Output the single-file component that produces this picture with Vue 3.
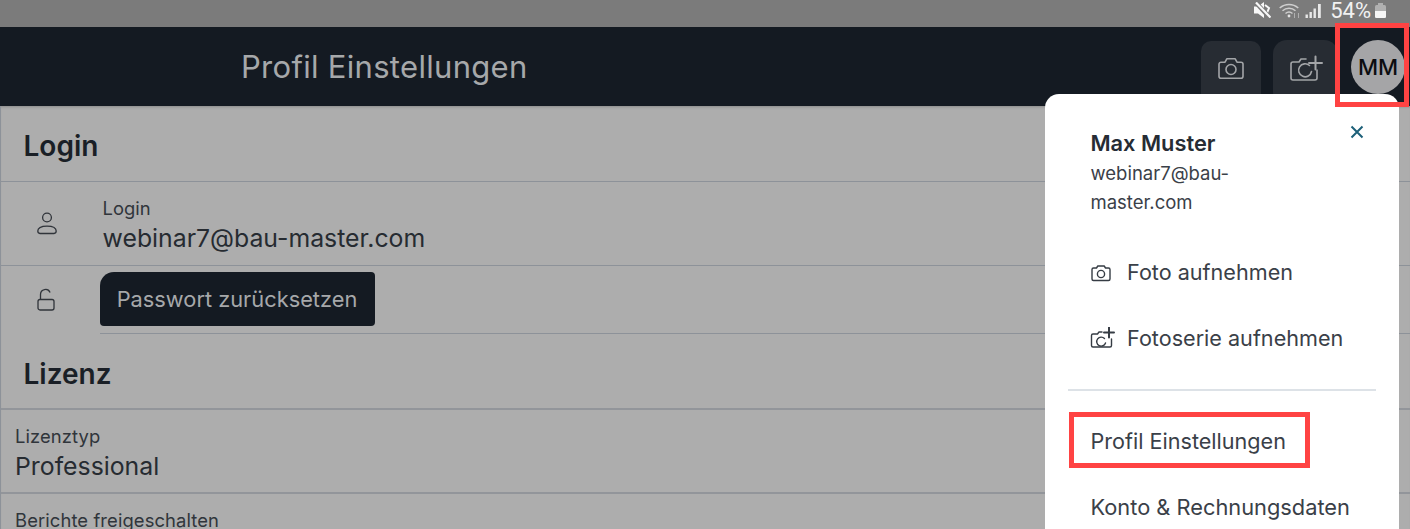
<script setup>
const lizenz = [
  { label: 'Lizenztyp', value: 'Professional' },
  { label: 'Berichte freigeschalten', value: '' },
]
</script>

<template>
  <div class="page">
    <div class="status">
      <svg class="mute" width="17" height="16" viewBox="0 0 17 16"><path d="M0 4.500h4L10 0v16l-6-4.500H0z" fill="#f8f8f8"/><path d="M11 3l4 3-2 5" fill="none" stroke="#f8f8f8" stroke-width="2"/><path d="M0.500 -1l15 16.500" stroke="#7b7b7b" stroke-width="4.500"/><path d="M2 0.500l14.500 15" stroke="#f8f8f8" stroke-width="2.200"/></svg>
      <svg class="wifi" width="22" height="15" viewBox="0 0 22 15" fill="none" stroke="#cfcfcf" stroke-width="1.500"><path d="M0.700 5a14 14 0 0 1 18.600 0"/><path d="M3.500 7.800a9.800 9.800 0 0 1 13 0"/><path d="M6.500 10.500a5.500 5.500 0 0 1 7 0"/><circle cx="10" cy="13" r="1.400" fill="#e4e4e4" stroke="none"/><path d="M15.500 10v5M19.500 15v-5" stroke-width="1" stroke="#b0b0b0"/></svg>
      <svg class="signal" width="16" height="14" viewBox="0 0 16 14" fill="#e8e8e8"><rect x="0.500" y="10.500" width="2.400" height="3.500"/><rect x="4.500" y="8" width="2.400" height="6"/><rect x="8.500" y="4.500" width="2.400" height="9.500"/><rect x="13" y="0" width="2.800" height="14"/></svg>
      <span class="pct">54%</span>
      <svg class="batt" width="13" height="15" viewBox="0 0 13 15"><rect x="4" y="0" width="5" height="2" fill="#b0b0b0"/><rect x="1" y="2" width="11" height="13" rx="1.500" fill="#b0b0b0"/><path d="M1 8h11v5.500a1.500 1.500 0 0 1-1.500 1.500h-8A1.500 1.500 0 0 1 1 13.500z" fill="#f6f6f6"/></svg>
    </div>

    <header class="topbar">
      <h1 class="title">Profil Einstellungen</h1>
      <div class="actions">
        <button class="iconbtn first">
          <svg width="28" height="26" viewBox="0 0 28 26" fill="none" stroke="#a3a5a8" stroke-width="1.600" stroke-linejoin="round"><path d="M2 9.200a2 2 0 0 1 2-2h4l1.800-3.400h8.400l1.800 3.400h4a2 2 0 0 1 2 2v12a2 2 0 0 1-2 2H4a2 2 0 0 1-2-2z"/><circle cx="14" cy="14.500" r="5"/></svg>
        </button>
        <button class="iconbtn second">
          <svg width="34" height="30" viewBox="0 0 34 30" fill="none" stroke="#a3a5a8" stroke-width="1.600" stroke-linejoin="round" stroke-linecap="round"><path d="M17 7h-5l-2 3H4a2 2 0 0 0-2 2v14a2 2 0 0 0 2 2h22a2 2 0 0 0 2-2v-8"/><path d="M20.500 13.500a6.500 6.500 0 1 0 2 6"/><path d="M26.500 4.500v13M20 11h13" stroke-width="2"/></svg>
        </button>
        <div class="avatar">MM</div>
      </div>
    </header>

    <main class="content">
      <h2 class="section">Login</h2>
      <div class="row login">
        <span class="rowicon">
          <svg width="22" height="24" viewBox="0 0 22 24" fill="none" stroke="#30343a" stroke-width="1.300"><circle cx="11" cy="6.500" r="4.400"/><path d="M4 22.500h14a2.400 2.400 0 0 0 2.200-2.400c0-3.200-3.600-5-9.200-5s-9.200 1.800-9.200 5A2.400 2.400 0 0 0 4 22.500z"/></svg>
        </span>
        <div class="field">
          <div class="label">Login</div>
          <div class="value">webinar7@bau-master.com</div>
        </div>
      </div>
      <div class="row pass">
        <span class="rowicon lock">
          <svg width="20" height="24" viewBox="0 0 20 24" fill="none" stroke="#30343a" stroke-width="1.300"><rect x="2" y="11.500" width="16" height="10.500" rx="2"/><path d="M4.500 11.500V6.500a5 5 0 0 1 9.600-2"/></svg>
        </span>
        <div class="passcell"><button class="reset">Passwort zurücksetzen</button></div>
      </div>
      <h2 class="section lic">Lizenz</h2>
      <div v-for="item in lizenz" :key="item.label" class="row plain">
        <div class="label">{{ item.label }}</div>
        <div class="value">{{ item.value }}</div>
      </div>
    </main>

    <aside class="menu">
      <button class="close" aria-label="Schließen">
        <svg width="14" height="14" viewBox="0 0 14 14" stroke="#1d6079" stroke-width="2" fill="none"><path d="M1.500 1.500l11 11M12.500 1.500l-11 11"/></svg>
      </button>
      <div class="name">Max Muster</div>
      <div class="mail">webinar7@bau-<br>master.com</div>
      <div class="item photo">
        <svg width="22" height="20" viewBox="0 0 22 20" fill="none" stroke="#363c44" stroke-width="1.400" stroke-linejoin="round"><path d="M2 6.500A1.500 1.500 0 0 1 3.500 5h3l1.300-2h6.400l1.300 2h3A1.500 1.500 0 0 1 20 6.500v9.500a1.500 1.500 0 0 1-1.500 1.500h-15A1.500 1.500 0 0 1 2 16z"/><circle cx="11" cy="11" r="3.600"/></svg>
        <span>Foto aufnehmen</span>
      </div>
      <div class="item series">
        <svg width="26" height="22" viewBox="0 0 26 22" fill="none" stroke="#363c44" stroke-width="1.400" stroke-linejoin="round" stroke-linecap="round"><path d="M12 5H9L7.500 7H3a1.500 1.500 0 0 0-1.500 1.500v10A1.500 1.500 0 0 0 3 20h17a1.500 1.500 0 0 0 1.500-1.500V12"/><path d="M14.500 11.500a4.500 4.500 0 1 0 1 4.500"/><path d="M19 0.500v10M14 5.500h10" stroke-width="2"/></svg>
        <span>Fotoserie aufnehmen</span>
      </div>
      <hr class="divider">
      <div class="link profile">Profil Einstellungen</div>
      <div class="link account">Konto &amp; Rechnungsdaten</div>
    </aside>

    <div class="mark mark-avatar"></div>
    <div class="mark mark-profile"></div>
  </div>
</template>

<style>
html, body { margin: 0; padding: 0; overflow: hidden; }
</style>

<style scoped>
.page {
  position: relative;
  width: 1410px;
  height: 529px;
  overflow: hidden;
  background: #adadad;
  font-family: Inter, "Liberation Sans", sans-serif;
  color: #2b3036;
}
.status {
  height: 27px;
  background: #7b7b7b;
  display: flex;
  align-items: center;
  justify-content: flex-end;
  padding: 0 23px 5px 0;
  box-sizing: border-box;
  color: #f2f2f2;
}
.mute { margin-right: 8px; margin-bottom: 2px; }
.wifi { margin-right: 4px; margin-bottom: 1px; }
.signal { margin-right: 9px; }
.pct { font: 22px/20px Roboto, sans-serif; margin-right: 3px; }
.batt { margin-bottom: 2px; }
.topbar {
  height: 79px;
  background: #141a22;
  display: flex;
  align-items: center;
  justify-content: space-between;
  padding-left: 241px;
  box-sizing: border-box;
}
.title {
  margin: 0;
  font-size: 31px;
  font-weight: 400;
  color: #a6a8aa;
  letter-spacing: 0.3px;
}
.actions { display: flex; align-items: flex-start; height: 79px; padding-top: 13px; box-sizing: border-box; }
.iconbtn {
  border: 0;
  margin-top: 1px;
  background: #272c33;
  border-radius: 10px;
  display: flex;
  justify-content: center;
  align-items: flex-start;
  padding: 0;
}
.first { width: 60px; height: 65px; margin-right: 12px; padding-top: 14px; }
.second { width: 65px; height: 66px; margin-top: 0; margin-right: 13px; padding-top: 12px; border-radius: 14px; }
.avatar {
  width: 54px;
  height: 54px;
  margin-right: 5px;
  border-radius: 50%;
  background: #a5a5a7;
  color: #0b0d10;
  font-size: 22px;
  font-weight: 500;
  display: flex;
  align-items: center;
  justify-content: center;
}
.content {
  border-left: 1px solid #8d9299;
  box-shadow: inset 0 3px 3px -2px #8a8a8a;
}
.section {
  margin: 0;
  height: 75px;
  padding-left: 22.500px;
  box-sizing: border-box;
  font-size: 28px;
  font-weight: 600;
  color: #1a1f26;
  line-height: 80px;
}
.lic { height: 74px; line-height: 81px; }
.row { box-sizing: border-box; display: flex; }
.login { height: 84px; border-top: 1px solid #8d9299; }
.rowicon { width: 101.600px; padding-left: 35px; padding-top: 29px; box-sizing: border-box; }
.lock { padding-top: 22px; }
.field { padding-top: 15px; }
.label { font-size: 18.400px; line-height: 22px; color: #30353b; }
.plain .label:first-child { letter-spacing: 0.1px; }
.value { font-size: 24.800px; line-height: 36px; margin-top: 1px; color: #262b31; }
.pass { height: 69px; border-top: 1px solid #8d9299; }
.passcell { flex: 1; margin-left: -2.600px; padding-top: 6px; border-bottom: 1px solid #8d9299; }
.reset {
  display: block;
  width: 275px;
  height: 54px;
  border: 0;
  padding: 0 1px 0 0;
  background: #141a22;
  color: #a6a8aa;
  border-radius: 14px 4px 4px 4px;
  font: 400 21.800px Inter, sans-serif;
}
.plain { flex-direction: column; height: 84px; border-top: 2px solid #92959a; padding: 15px 0 0 14px; }
.menu {
  position: absolute;
  left: 1045px;
  top: 94px;
  width: 354px;
  height: 460px;
  background: #fff;
  border-radius: 14px;
  box-sizing: border-box;
  padding: 35px 0 0 45.500px;
  color: #3a4048;
}
.close { position: absolute; left: 305px; top: 31px; border: 0; padding: 0; background: none; line-height: 0; }
.name { font-size: 21.800px; font-weight: 600; line-height: 28px; color: #262c34; }
.mail { font-size: 18.500px; line-height: 28.500px; margin-top: 2px; }
.item { display: flex; align-items: center; font-size: 21.600px; position: absolute; left: 45px; }
.item svg { flex: none; }
.item span { position: absolute; white-space: nowrap; left: 37px; }
.photo { top: 168px; height: 22px; }
.photo span { top: -3px; }
.series { top: 233px; height: 22px; }
.series span { top: -2px; }
.divider { position: absolute; left: 23px; top: 295px; width: 308px; margin: 0; border: 0; height: 2px; background: #dde2e7; }
.link { position: absolute; left: 45.500px; white-space: nowrap; line-height: 28px; }
.profile { top: 333px; font-size: 21.600px; }
.account { top: 399px; font-size: 21.800px; }
.mark { position: absolute; box-sizing: border-box; border: 5px solid #ff4343; }
.mark-avatar { left: 1335px; top: 23px; width: 74px; height: 84px; }
.mark-profile { left: 1069px; top: 412px; width: 241px; height: 56px; }
</style>
